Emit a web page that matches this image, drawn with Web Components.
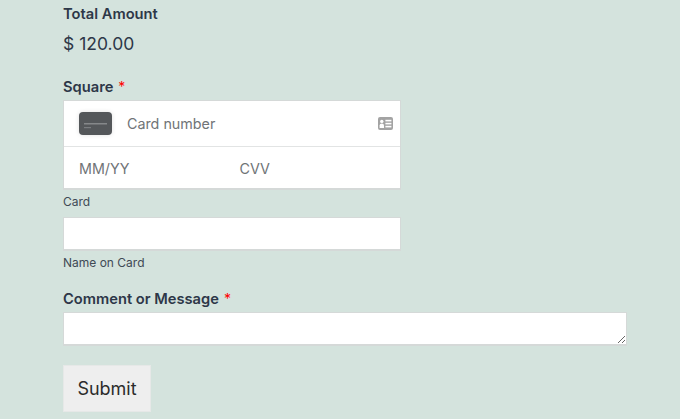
<!DOCTYPE html>
<html lang="en">
<head>
<meta charset="utf-8">
<title>Payment form</title>
<style>
html, body { margin: 0; padding: 0; height: 419px; overflow: hidden; background: #d4e3dd; }
body { font-family: Inter, "Liberation Sans", sans-serif; color: #2d3748; }
</style>
</head>
<body>
<payment-form>
	<field-label style="--top: 5px; --height: 18px">Total Amount</field-label>
	<total-price>$ 120.00</total-price>
	<field-label required style="--top: 21px">Square</field-label>
	<card-input></card-input>
	<field-hint style="--top: 4px">Card</field-hint>
	<text-box style="--top: 7px; --box-width: 338px; --box-height: 34px"></text-box>
	<field-hint style="--top: 4px">Name on Card</field-hint>
	<field-label required style="--top: 18px">Comment or Message</field-label>
	<text-box resize style="--top: 3px; --box-width: 564px; --box-height: 34px"></text-box>
	<submit-button>Submit</submit-button>
</payment-form>

<script>
// PaymentForm - column that holds all of the fields
class PaymentForm extends HTMLElement {
	constructor() {
		super();
		this.shadow = this.attachShadow({ mode: 'open' });
		this.shadow.innerHTML = `
		<style>
			:host { display: flex; flex-direction: column; align-items: flex-start; padding-left: 63px; }
		</style>
		<slot></slot>`;
	}
}

class FieldLabel extends HTMLElement {
	constructor() {
		super();
		this.shadow = this.attachShadow({ mode: 'open' });
		const star = this.hasAttribute('required') ? '<span class="star">*</span>' : '';
		this.shadow.innerHTML = `
		<style>
			:host {
				display: block;
				margin-top: var(--top, 0);
				font-size: 14.7px;
				line-height: var(--height, 20px);
				font-weight: 600;
				color: #2d3748;
			}
			.star { color: #f00; font-weight: 400; font-size: 14px; margin-left: 5px; }
		</style>
		<slot></slot>${star}`;
	}
}

class TotalPrice extends HTMLElement {
	constructor() {
		super();
		this.shadow = this.attachShadow({ mode: 'open' });
		this.shadow.innerHTML = `
		<style>
			:host { display: block; margin-top: 9px; font-size: 17.5px; line-height: 24px; color: #2d3748; }
		</style>
		<slot></slot>`;
	}
}

class FieldHint extends HTMLElement {
	constructor() {
		super();
		this.shadow = this.attachShadow({ mode: 'open' });
		this.shadow.innerHTML = `
		<style>
			:host { display: block; margin-top: var(--top, 0); font-size: 12px; line-height: 16px; color: #3f4a55; }
		</style>
		<slot></slot>`;
	}
}

// CardInput - the Square card widget, number row on top, expiry and cvv below
class CardInput extends HTMLElement {
	constructor() {
		super();
		this.shadow = this.attachShadow({ mode: 'open' });
		this.shadow.innerHTML = `
		<style>
			:host {
				display: block;
				box-sizing: border-box;
				width: 338px;
				height: 90px;
				background: #fff;
				border: 1px solid #d5d9d8;
				border-bottom-width: 2px;
				color: #707477;
				font-size: 14.3px;
				margin-top: 3px;
			}
			.number {
				display: flex;
				align-items: center;
				height: 45px;
				padding: 0 7px 0 15px;
				border-bottom: 1px solid #e2e4e4;
			}
			.chip { display: block; width: 33px; height: 23px; margin-right: 15px; filter: drop-shadow(0 0 2px rgba(0,0,0,.12)); }
			.number span { flex: 1; }
			.id { display: block; width: 15px; height: 13px; }
			.lower { display: flex; align-items: center; height: 42px; padding-left: 15px; }
			.lower span { width: 161.5px; }
		</style>
		<div class="number">
			<svg class="chip" viewBox="0 0 33 23">
				<rect width="33" height="23" rx="4" fill="#54575a"/>
				<rect x="5" y="11" width="23" height="1.5" fill="#85888a"/>
				<rect x="5" y="15" width="7" height="1.2" fill="#7a7d80"/>
			</svg>
			<span>Card number</span>
			<svg class="id" viewBox="0 0 15 13">
				<rect width="15" height="13" rx="2" fill="#a3a3a3"/>
				<circle cx="3.8" cy="4.4" r="1.7" fill="#fff"/>
				<path d="M1.6 11V8.6a2.2 2.2 0 0 1 4.4 0V11z" fill="#fff"/>
				<rect x="7.4" y="2.8" width="6" height="1.6" fill="#fff"/>
				<rect x="7.4" y="5.8" width="6" height="1.6" fill="#fff"/>
				<rect x="7.4" y="8.8" width="6" height="1.6" fill="#fff"/>
			</svg>
		</div>
		<div class="lower"><span>MM/YY</span><span>CVV</span></div>`;
	}
}

class TextBox extends HTMLElement {
	constructor() {
		super();
		this.shadow = this.attachShadow({ mode: 'open' });
		const resize = this.hasAttribute('resize') ? 'both' : 'none';
		this.shadow.innerHTML = `
		<style>
			:host { display: block; margin-top: var(--top, 0); }
			textarea {
				display: block;
				box-sizing: border-box;
				width: var(--box-width);
				height: var(--box-height);
				margin: 0;
				padding: 0;
				background: #fff;
				border: 1px solid #d5d9d8;
				border-bottom-width: 2px;
				border-radius: 0;
				outline: none;
				resize: ${resize};
			}
		</style>
		<textarea aria-label="Field"></textarea>`;
	}
}

class SubmitButton extends HTMLElement {
	constructor() {
		super();
		this.shadow = this.attachShadow({ mode: 'open' });
		this.shadow.innerHTML = `
		<style>
			:host { display: block; margin-top: 19px; }
			button {
				display: block;
				width: 88px;
				height: 47px;
				padding: 0;
				background: #eeeeee;
				border: 1px solid #e6e8e7;
				border-radius: 0;
				color: #2b2b2b;
				font: 400 18px Inter, "Liberation Sans", sans-serif;
			}
		</style>
		<button type="button"><slot></slot></button>`;
	}
}

customElements.define('payment-form', PaymentForm);
customElements.define('field-label', FieldLabel);
customElements.define('total-price', TotalPrice);
customElements.define('field-hint', FieldHint);
customElements.define('card-input', CardInput);
customElements.define('text-box', TextBox);
customElements.define('submit-button', SubmitButton);
</script>
</body>
</html>
